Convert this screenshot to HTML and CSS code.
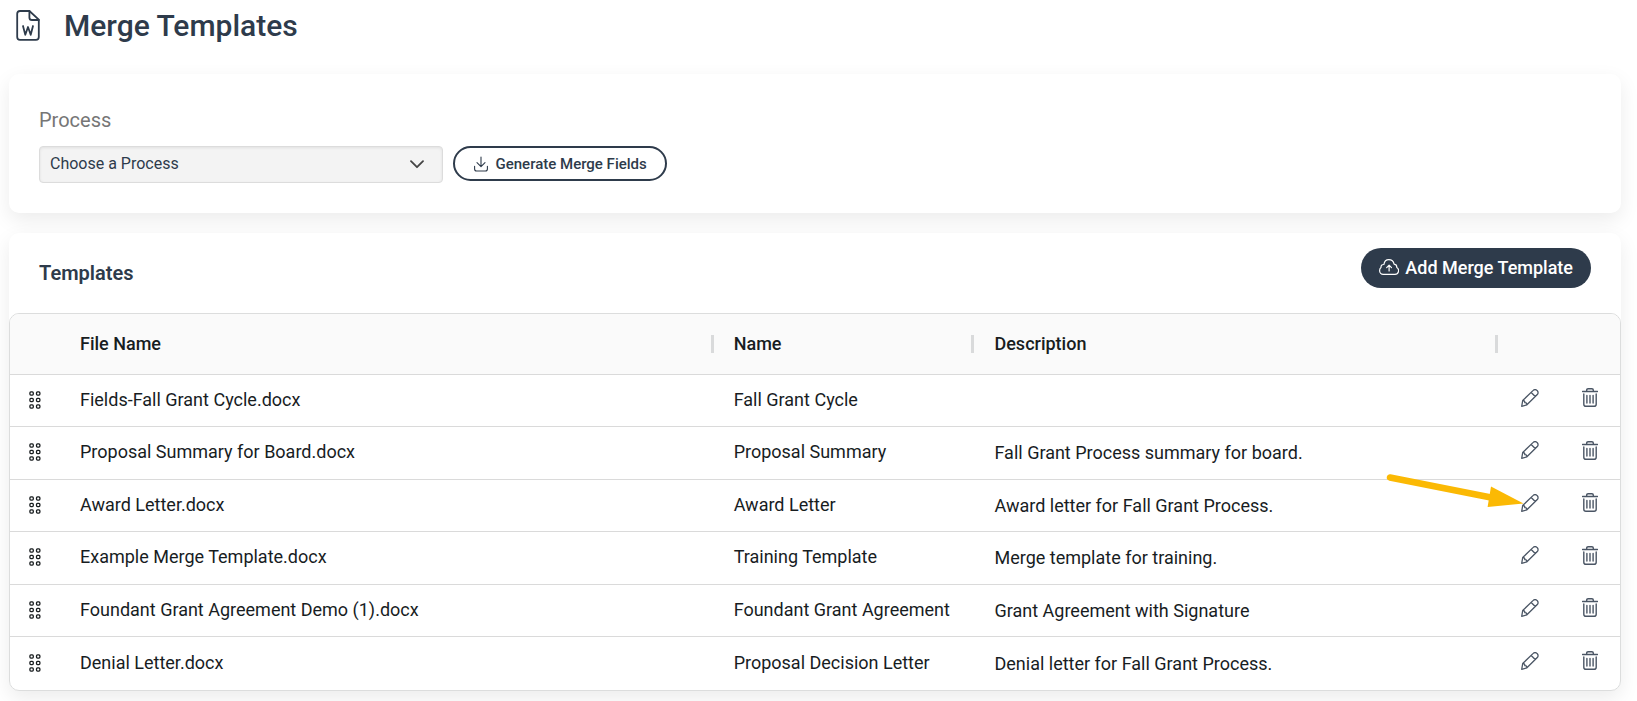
FILE: index.html
```html
<!DOCTYPE html>
<html lang="en">
<head>
<meta charset="utf-8">
<title>Merge Templates</title>
<link rel="stylesheet" href="styles.css">
</head>
<body>
<svg class="sprite" aria-hidden="true">
  <symbol id="grip" viewBox="0 0 12 18">
    <g fill="none" stroke="currentColor" stroke-width="1.3">
      <rect x="0.9" y="0.9" width="3.4" height="3.2" rx="1"/><rect x="7.5" y="0.9" width="3.4" height="3.2" rx="1"/>
      <rect x="0.9" y="7.4" width="3.4" height="3.2" rx="1"/><rect x="7.5" y="7.4" width="3.4" height="3.2" rx="1"/>
      <rect x="0.9" y="13.9" width="3.4" height="3.2" rx="1"/><rect x="7.5" y="13.9" width="3.4" height="3.2" rx="1"/>
    </g>
  </symbol>
  <symbol id="pencil" viewBox="0 0 18 18">
    <path d="M1.7 11.5 12.2 1.4a2.6 2.6 0 0 1 3.7 0l.4.4a2.6 2.6 0 0 1 0 3.7L5.9 15.8.7 17.3ZM10.2 3.5l4 4M1.7 11.5c1.6 0 2.2.7 2.1 2.1 1.3-.1 2 .6 2.1 2.2" fill="none" stroke="currentColor" stroke-width="1.3" stroke-linejoin="round"/>
  </symbol>
  <symbol id="trash" viewBox="0 0 16 19">
    <path d="M.5 3.5h15M4.700 3.200V2.100Q4.700.7 6.100.7h3.800q1.400 0 1.400 1.400v1.100M1.800 6v10.200q0 2.100 2.100 2.100h8.200q2.100 0 2.100-2.100V6M4.900 7.500v7.500M8 7.500v7.500M11.100 7.500v7.500" fill="none" stroke="currentColor" stroke-width="1.400" stroke-linecap="round"/>
  </symbol>
</svg>

<header class="page-head">
  <svg class="page-icon" viewBox="0 0 24 31" aria-hidden="true">
    <g fill="none" stroke="currentColor" stroke-width="1.8" stroke-linejoin="round" stroke-linecap="round">
      <path d="M13.4 1H4Q1.200 1 1.200 3.800V27Q1.200 29.800 4 29.800H20Q22.800 29.800 22.800 27V9.600Z"/>
      <path d="M13.400 1V7.400Q13.400 10 16 10H22.800"/>
      <path d="M7 16 9.300 24.800 12 17 14.700 24.800 17 16"/>
    </g>
  </svg>
  <h1 class="page-title">Merge Templates</h1>
</header>

<main class="stack">
  <section class="card process">
    <label class="process-label" for="process">Process</label>
    <div class="process-row">
      <div class="select-wrap">
        <select class="select" id="process"><option>Choose a Process</option></select>
        <svg class="chevron" viewBox="0 0 14 9" aria-hidden="true"><path d="M1 1.200 7 7.200 13 1.200" fill="none" stroke="currentColor" stroke-width="1.8" stroke-linecap="round" stroke-linejoin="round"/></svg>
      </div>
      <button class="btn btn-outline" type="button">
        <svg class="icon-download" viewBox="0 0 14 16" aria-hidden="true"><path d="M7 1v9.500M3 6.700l4 3.900 4-3.900M.6 10.300v2.700q0 2 2 2h8.800q2 0 2-2v-2.700" fill="none" stroke="currentColor" stroke-width="1.100" stroke-linecap="round" stroke-linejoin="round"/></svg>
        Generate Merge Fields
      </button>
    </div>
  </section>

  <section class="card">
    <div class="templates-head">
      <h2 class="section-title">Templates</h2>
      <button class="btn btn-solid" type="button">
        <svg class="icon-cloud" viewBox="0 0 20 16" aria-hidden="true"><path d="M4.200 15.300h11.800a3.600 3.600 0 0 0 1.800-6.700q.2-3-2.700-3.400Q14.200.7 9.800.7 5.600.7 4.900 5.500 1.900 5.300 2 8.500.6 9.500.6 11.700a3.600 3.600 0 0 0 3.600 3.600ZM10.100 12V6.300M7.700 8.600 10.100 6.200l2.400 2.400" fill="none" stroke="currentColor" stroke-width="1.200" stroke-linecap="round" stroke-linejoin="round"/></svg>
        Add Merge Template
      </button>
    </div>
    <div class="grid">
      <table class="table">
        <colgroup><col class="c-grip"><col class="c-file"><col class="c-name"><col><col class="c-act"><col class="c-act"></colgroup>
        <thead>
          <tr><th></th><th class="sep">File Name</th><th class="sep">Name</th><th class="sep">Description</th><th></th><th></th></tr>
        </thead>
        <tbody>
          <tr><td class="grip"><svg><use href="#grip"/></svg></td><td>Fields-Fall Grant Cycle.docx</td><td>Fall Grant Cycle</td><td class="desc"></td><td class="act"><button type="button" aria-label="Edit"><svg class="pencil"><use href="#pencil"/></svg></button></td><td class="act"><button type="button" aria-label="Delete"><svg class="trash"><use href="#trash"/></svg></button></td></tr>
          <tr><td class="grip"><svg><use href="#grip"/></svg></td><td>Proposal Summary for Board.docx</td><td>Proposal Summary</td><td class="desc">Fall Grant Process summary for board.</td><td class="act"><button type="button" aria-label="Edit"><svg class="pencil"><use href="#pencil"/></svg></button></td><td class="act"><button type="button" aria-label="Delete"><svg class="trash"><use href="#trash"/></svg></button></td></tr>
          <tr><td class="grip"><svg><use href="#grip"/></svg></td><td>Award Letter.docx</td><td>Award Letter</td><td class="desc">Award letter for Fall Grant Process.</td><td class="act"><button type="button" aria-label="Edit"><svg class="pencil"><use href="#pencil"/></svg></button><svg class="pointer" viewBox="0 0 140 40" aria-hidden="true"><path d="M5 6.500 106 26.500" stroke="currentColor" stroke-width="6.500" stroke-linecap="round"/><path d="M106 15.600 138.500 32.600 102.600 36Z" fill="currentColor"/></svg></td><td class="act"><button type="button" aria-label="Delete"><svg class="trash"><use href="#trash"/></svg></button></td></tr>
          <tr><td class="grip"><svg><use href="#grip"/></svg></td><td>Example Merge Template.docx</td><td>Training Template</td><td class="desc">Merge template for training.</td><td class="act"><button type="button" aria-label="Edit"><svg class="pencil"><use href="#pencil"/></svg></button></td><td class="act"><button type="button" aria-label="Delete"><svg class="trash"><use href="#trash"/></svg></button></td></tr>
          <tr><td class="grip"><svg><use href="#grip"/></svg></td><td>Foundant Grant Agreement Demo (1).docx</td><td>Foundant Grant Agreement</td><td class="desc">Grant Agreement with Signature</td><td class="act"><button type="button" aria-label="Edit"><svg class="pencil"><use href="#pencil"/></svg></button></td><td class="act"><button type="button" aria-label="Delete"><svg class="trash"><use href="#trash"/></svg></button></td></tr>
          <tr><td class="grip"><svg><use href="#grip"/></svg></td><td>Denial Letter.docx</td><td>Proposal Decision Letter</td><td class="desc">Denial letter for Fall Grant Process.</td><td class="act"><button type="button" aria-label="Edit"><svg class="pencil"><use href="#pencil"/></svg></button></td><td class="act"><button type="button" aria-label="Delete"><svg class="trash"><use href="#trash"/></svg></button></td></tr>
        </tbody>
      </table>
    </div>
  </section>
</main>
</body>
</html>
```
FILE: styles.css
```css
* { box-sizing: border-box; }
body {
  margin: 0;
  background: #fff;
  color: #2e3b4b;
  font-family: Roboto, "Liberation Sans", sans-serif;
  font-size: 18px;
  line-height: 24px;
}
button, select { font-family: inherit; color: inherit; }
svg { display: block; }
.sprite { position: absolute; width: 0; height: 0; }

.page-head { display: flex; align-items: center; gap: 24px; height: 50px; padding-left: 16px; }
.page-icon { width: 24px; height: 31px; }
.page-title { margin: 0; padding-top: 2px; font-size: 30px; line-height: 40px; font-weight: 500; }

.stack { display: grid; gap: 20px; padding: 24px 16px 11px 9px; }
.card { background: #fff; border-radius: 10px; box-shadow: 0 7px 20px rgba(0, 0, 0, 0.08); }

.process { padding: 34px 30px 30px; }
.process-label { display: block; margin-bottom: 14px; font-size: 20px; color: #767676; }
.process-row { display: flex; align-items: flex-start; gap: 10px; }
.select-wrap { position: relative; width: 26%; }
.select {
  appearance: none;
  display: block;
  width: 100%;
  height: 37px;
  padding: 0 40px 2px 10px;
  border: 1px solid #dcdcdc;
  border-radius: 4px;
  background: #f3f3f3;
  box-shadow: inset 0 1px 3px rgba(0, 0, 0, 0.08);
  font-size: 16px;
}
.chevron { position: absolute; right: 19px; top: 14px; width: 14px; height: 9px; color: #444; pointer-events: none; }

.btn { display: flex; align-items: center; border-radius: 20px; font-weight: 500; white-space: nowrap; }
.btn-outline { height: 35px; padding: 0 18px 0 19px; gap: 8px; border: 2px solid #2e3b4b; background: #fff; font-size: 15px; }
.icon-download { width: 14px; height: 16px; }
.btn-solid { height: 40px; padding: 0 18px 2px; gap: 6px; border: 0; background: #2e3b4b; color: #fff; font-size: 18px; }
.icon-cloud { width: 20px; height: 16px; }

.templates-head { display: flex; align-items: flex-start; justify-content: space-between; height: 80px; padding: 15px 30px 0; }
.section-title { margin: 13px 0 0; font-size: 20px; line-height: 24px; font-weight: 600; }

.grid { border: 1px solid #dcdddd; border-radius: 10px; overflow: hidden; }
.table { width: 100%; border-collapse: separate; border-spacing: 0; table-layout: fixed; color: #181d1f; }
.c-grip { width: 50px; }
.c-file { width: 40.6%; }
.c-name { width: 16.2%; }
.c-act { width: 61px; }
th { position: relative; height: 61px; padding: 0 20px; background: #fafafa; border-bottom: 1px solid #dadada; text-align: left; font-weight: 500; }
.sep::after { content: ""; position: absolute; right: 0; top: 21px; width: 3px; height: 18px; background: #d9dadb; }
td { height: 52px; padding: 0 20px 2px; border-bottom: 1px solid #dadada; }
tr:nth-child(even) td { height: 53px; }
tr:last-child td { border-bottom: 0; }
.desc { padding-bottom: 0; }
.grip svg { width: 12px; height: 18px; }
.grip { padding: 0 0 2px 19px; }
.act { position: relative; padding: 0 0 6px 23px; }
.act button { display: block; padding: 0; border: 0; background: none; color: #4a5564; }
.pencil { width: 18px; height: 18px; }
.trash { width: 16px; height: 19px; }
.pointer { position: absolute; right: 34px; top: -9px; width: 140px; height: 40px; color: #fbb904; }
```
